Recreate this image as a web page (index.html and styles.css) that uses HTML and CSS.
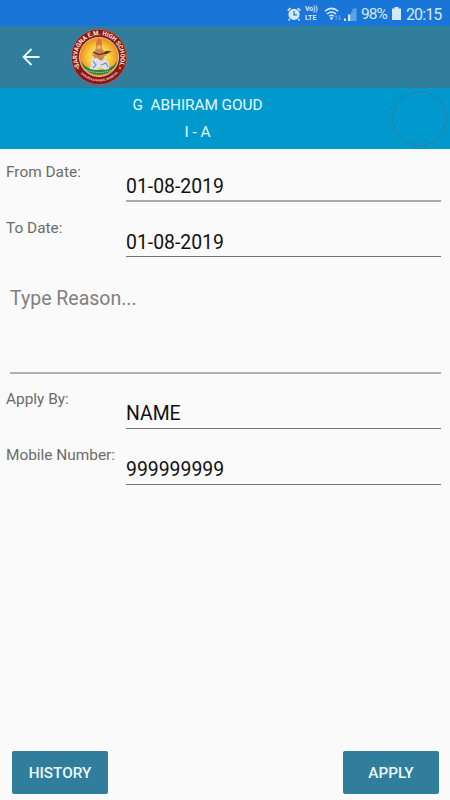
FILE: index.html
```
<!DOCTYPE html>
<html lang="en">
<head>
<meta charset="utf-8">
<title>Leave application</title>
<link rel="stylesheet" href="styles.css">
</head>
<body>
<div class="screen">
  <div class="status">
    <svg class="alarm" width="14" height="14" viewBox="0 0 14 14"><circle cx="7" cy="7.4" r="5.6" fill="#d3e9fb"/><path d="M.8 3.6 3.4 1M13.2 3.6 10.6 1M2.6 12l-1 1.4M11.4 12l1 1.4" stroke="#d3e9fb" stroke-width="1.7"/><path d="M7 4v3.8h3" fill="none" stroke="#1976d8" stroke-width="1.3"/></svg>
    <span class="volte"><span>Vo))</span><span class="lte">LTE</span></span>
    <svg class="wifi" width="18" height="14" viewBox="0 0 18 14"><g fill="none" stroke="#d3e9fb" stroke-width="1.5"><path d="M.8 4.3Q7.5-1.5 14.2 4.3"/><path d="M3 6.9Q7.5 3.1 12 6.9"/><path d="M5.2 9.3Q7.5 7.3 9.8 9.3"/></g><circle cx="7.5" cy="11.4" r="1.3" fill="#d3e9fb"/><path d="M12.2 13V8.5m-1.3 1.4 1.3-1.4 1.3 1.4M15.7 8v4.5m-1.3-1.4 1.3 1.4 1.3-1.4" fill="none" stroke="#68a9e8" stroke-width=".9"/></svg>
    <svg class="signal" width="13" height="13" viewBox="0 0 13 13"><path d="M0 10.500h2v2.500H0zM4 6.500h2.500V13H4z" fill="#d3e9fb"/><path d="M7 4h1.500V13H7zM8.500 1l4-1v13h-4z" fill="#5ea1e5"/></svg>
    <span class="pct">98%</span>
    <svg class="battery" width="9" height="13" viewBox="0 0 9 13"><path d="M2.5 0h4v1.5H9V13H0V1.5h2.5z" fill="#d3e9fb"/></svg>
    <span class="clock">20:15</span>
  </div>
  <div class="appbar">
    <svg class="back" width="18" height="18" viewBox="0 0 18 18"><path d="M17.5 9H1.5M9.5 1 1.5 9l8 8" fill="none" stroke="#e9fbff" stroke-width="1.8"/></svg>
    <svg class="logo" width="58" height="58" viewBox="0 0 58 58">
      <defs>
        <radialGradient id="glow"><stop offset="0" stop-color="#fff3a0"/><stop offset=".55" stop-color="#f8cf42"/><stop offset="1" stop-color="#e78d1e"/></radialGradient>
        <path id="arcTop" d="M9.500 38.500A21.700 21.700 0 1 1 48.500 38.500"/>
        <path id="arcBottom" d="M9.2 43.5A24.7 24.7 0 0 0 48.8 43.5"/>
      </defs>
      <circle cx="29" cy="29" r="27.7" fill="#86191d" stroke="#b9605a" stroke-width=".8"/>
      <circle cx="29" cy="29" r="19.6" fill="url(#glow)" stroke="#f1d6a0" stroke-width=".8"/>
      <path d="M10.600 33Q16 42 29 42t18.400-9A19.200 19.200 0 0 1 10.600 33Z" fill="#278044"/>
      <path d="M14 41Q29 48 44 41" fill="none" stroke="#d8e8b5" stroke-width="1" stroke-dasharray="1 .8"/>
      <path d="M26 17l.5-4 1-1.500L29 9.500l1.500 2 1 1.500.5 4-.5 3h-5z" fill="#cf7a35"/>
      <path d="M25.500 21q3.500-4 7 0l2 7-2 5h-7l-2-5z" fill="#c98550"/>
      <circle cx="29" cy="19" r="2.200" fill="#efad72"/>
      <path d="M24 30q-4 2-3 7l-1.500 4 7.500 1 3-3 5 3 4-1v-4q-1-5-5-6l-3 2-4-3z" fill="#dde0ec"/>
      <path d="M23 33l3 4-3 3m8-3 5-2 2 4" fill="none" stroke="#7c8aab" stroke-width="1.200"/>
      <path d="M25 23l-2.500 4 5 2m5-7 3 5-4 2" fill="none" stroke="#d98b50" stroke-width="1.300"/>
      <path d="M23 24l6 2.500 8-2 4-1" fill="none" stroke="#652c18" stroke-width="1.200"/>
      <ellipse cx="36.500" cy="24.500" rx="3" ry="1.500" transform="rotate(-15 36.500 24.500)" fill="#7a321b"/>
      <text class="school"><textPath href="#arcTop" textLength="86" lengthAdjust="spacingAndGlyphs">SARVAGNA E.M. HIGH SCHOOL</textPath></text>
      <text class="place"><textPath href="#arcBottom" textLength="42" startOffset="2.500">SANJEEVA NAGAR, NANDYAL</textPath></text>
      <path d="M6.500 39l2.800 2m-2.400.5 2-3M51.500 39l-2.800 2m2.400.5-2-3" stroke="#e99a32" stroke-width="1"/>
    </svg>
  </div>
  <div class="profile">
    <div class="who"><div class="name">G&nbsp; ABHIRAM GOUD</div><div class="cls">I - A</div></div>
    <div class="avatar"></div>
  </div>
  <div class="form">
    <div class="row"><span class="label">From Date:</span><span class="value soft">01-08-2019</span></div>
    <div class="row"><span class="label">To Date:</span><span class="value short">01-08-2019</span></div>
    <div class="reason">Type Reason...</div>
    <div class="row"><span class="label">Apply By:</span><span class="value">NAME</span></div>
    <div class="row"><span class="label">Mobile Number:</span><span class="value">999999999</span></div>
  </div>
  <div class="actions"><div class="btn">HISTORY</div><div class="btn">APPLY</div></div>
</div>
</body>
</html>
```
FILE: styles.css
```
* { box-sizing: border-box; }
body { margin: 0; font-family: Roboto, sans-serif; }
.screen { width: 450px; height: 800px; background: #fafafa; display: flex; flex-direction: column; overflow: hidden; }
.status { height: 26px; background: #1976d8; color: #d3e9fb; display: flex; align-items: center; padding: 1px 0 0 287px; flex: none; white-space: nowrap; }
.status svg { flex: none; }
.volte { display: flex; flex-direction: column; width: 15px; margin-left: 4px; font-size: 7px; line-height: 8.5px; font-weight: 700; letter-spacing: -.2px; }
.lte { letter-spacing: .1px; line-height: 8px; }
.wifi { margin-left: 4px; }
.signal { margin-left: 2px; margin-top: 2px; }
.pct { width: 26px; margin: 1px 0 0 4px; font-size: 15.5px; letter-spacing: -.9px; }
.battery { margin-left: 5px; }
.clock { margin: 1px 0 0 5px; font-size: 16px; letter-spacing: -.9px; }
.appbar { height: 62px; flex: none; background: #317d9c; display: flex; align-items: center; padding-left: 22px; }
.logo { margin-left: 30px; }
.school { font-size: 6.3px; font-weight: 700; fill: #ffe9dc; }
.place { font-size: 3px; font-weight: 700; fill: #f6cfc0; }
.profile { height: 61px; flex: none; background: #0099cd; color: #e4f8ff; display: flex; justify-content: space-between; padding: 3px 3px 0 0; }
.who { width: 392px; padding: 1px 0 0 3px; text-align: center; font-size: 15.4px; line-height: 27px; }
.name { letter-spacing: -.05px; }
.avatar { width: 55px; height: 55px; flex: none; border: 1.5px solid #357f9c; border-radius: 50%; }
.form { flex: 1; padding: 0 9px 0 6px; }
.row { height: 56px; display: flex; }
.label { width: 120px; padding-top: 14px; font-size: 15.4px; line-height: 18px; color: #6b6b6b; white-space: nowrap; }
.value { flex: 1; height: 53px; padding-top: 26px; font-size: 19.4px; line-height: 24px; color: #111; border-bottom: 1px solid #707070; }
.soft { border-bottom: 2px solid #aaa; }
.short { height: 52px; }
.reason { height: 113px; margin: 0 0 2px 4px; padding-top: 25px; font-size: 19.5px; line-height: 26px; color: #808080; border-bottom: 2px solid #b0b0b0; }
.actions { flex: none; display: flex; justify-content: space-between; padding: 0 11px 6px 12px; }
.btn { width: 96px; height: 43px; border-radius: 2px; background: #317d9c; color: #e9fbff; font-size: 15.3px; font-weight: 500; line-height: 45px; text-align: center; }
```
